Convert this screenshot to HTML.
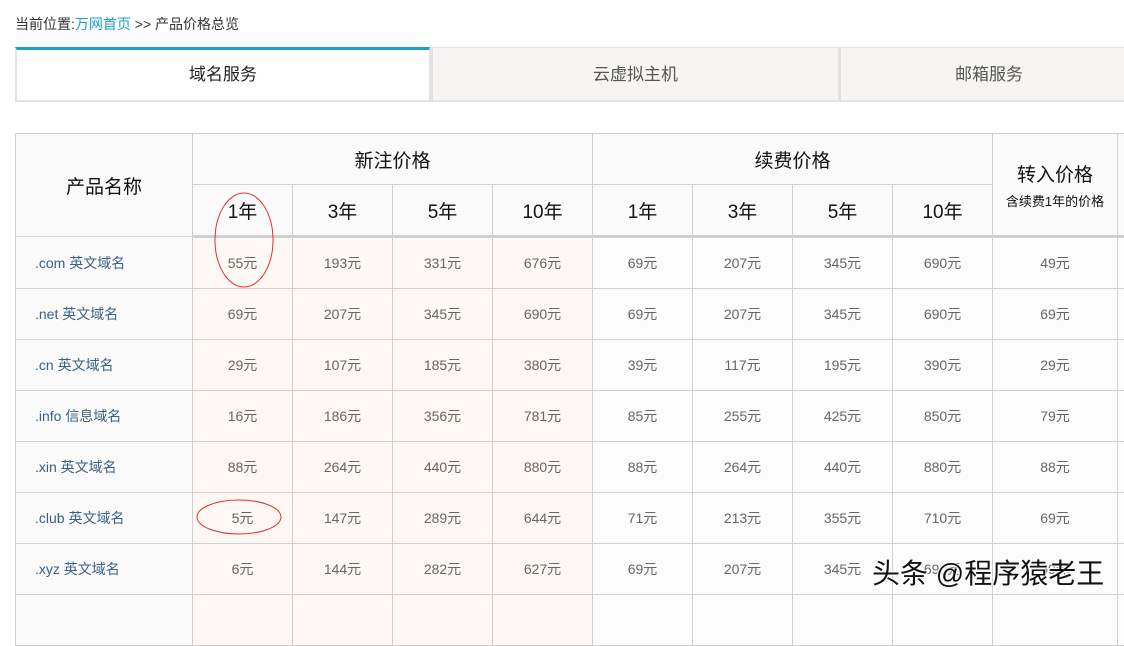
<!DOCTYPE html>
<html><head><meta charset="utf-8"><style>
body{margin:0;width:1124px;height:602px;overflow:hidden;background:#fff;font-family:"Liberation Sans","Noto Sans CJK SC",sans-serif;position:relative}
.bc{position:absolute;left:15px;top:14px;font-size:14px;color:#333}
.bc a{color:#1a9fd0}
.tab{position:absolute;top:47px;height:55px;box-sizing:border-box;background:#f7f5f3;border:1px solid #e2e2e2;border-bottom:2px solid #e2e2e2;text-align:center;line-height:54px;font-size:17px;color:#555}
.t1{left:15px;width:415px;background:#fff;border-top:3px solid #17a0c8;border-left:2px solid #e2e2e2;color:#222;line-height:50px}
.t2{left:430px;width:409px;border-left:3px solid #e2e2e2}
.t3{left:838px;width:300px;border-left:3px solid #e2e2e2}
table{position:absolute;left:15px;top:133px;width:1122px;border-collapse:collapse;table-layout:fixed}
td,th{border:1px solid #d0d0d0;text-align:center;font-weight:normal;padding:0}
th{background:#fafafa;color:#111;font-size:19px}
tr.h2 th{height:50px;border-bottom:3px solid #d0d0d0}
tr.h1 th{height:50px}
td{height:50px;font-size:14px;color:#666;background:#fcfcfc}
td.n{text-align:left;padding-left:19px;color:#3a5f86;background:#fafafa}
td.p{background:#fff7f4}
.sub{font-size:13px;display:block;margin-top:4px}
.wm{position:absolute;left:872px;top:552px;font-size:28px;color:#111;text-shadow:0 0 2px #fff,0 0 2px #fff,1px 1px 0 #fff,-1px -1px 0 #fff}
</style></head><body>
<div class="bc">当前位置:<a>万网首页</a> &gt;&gt; 产品价格总览</div>
<div class="tab t1">域名服务</div>
<div class="tab t2">云虚拟主机</div>
<div class="tab t3">邮箱服务</div>
<table>
<colgroup><col style="width:177px"><col style="width:100px"><col style="width:100px"><col style="width:100px"><col style="width:100px"><col style="width:100px"><col style="width:100px"><col style="width:100px"><col style="width:100px"><col style="width:125px"><col style="width:20px"></colgroup>
<tr class="h1"><th rowspan="2">产品名称</th><th colspan="4">新注价格</th><th colspan="4">续费价格</th><th rowspan="2" style="border-bottom:3px solid #d0d0d0">转入价格<span class="sub">含续费1年的价格</span></th><th rowspan="2" style="border-bottom:3px solid #d0d0d0"></th></tr>
<tr class="h2"><th>1年</th><th>3年</th><th>5年</th><th>10年</th><th>1年</th><th>3年</th><th>5年</th><th>10年</th></tr>
<tr><td class="n">.com 英文域名</td><td class="p">55元</td><td class="p">193元</td><td class="p">331元</td><td class="p">676元</td><td>69元</td><td>207元</td><td>345元</td><td>690元</td><td>49元</td><td></td></tr>
<tr><td class="n">.net 英文域名</td><td class="p">69元</td><td class="p">207元</td><td class="p">345元</td><td class="p">690元</td><td>69元</td><td>207元</td><td>345元</td><td>690元</td><td>69元</td><td></td></tr>
<tr><td class="n">.cn 英文域名</td><td class="p">29元</td><td class="p">107元</td><td class="p">185元</td><td class="p">380元</td><td>39元</td><td>117元</td><td>195元</td><td>390元</td><td>29元</td><td></td></tr>
<tr><td class="n">.info 信息域名</td><td class="p">16元</td><td class="p">186元</td><td class="p">356元</td><td class="p">781元</td><td>85元</td><td>255元</td><td>425元</td><td>850元</td><td>79元</td><td></td></tr>
<tr><td class="n">.xin 英文域名</td><td class="p">88元</td><td class="p">264元</td><td class="p">440元</td><td class="p">880元</td><td>88元</td><td>264元</td><td>440元</td><td>880元</td><td>88元</td><td></td></tr>
<tr><td class="n">.club 英文域名</td><td class="p">5元</td><td class="p">147元</td><td class="p">289元</td><td class="p">644元</td><td>71元</td><td>213元</td><td>355元</td><td>710元</td><td>69元</td><td></td></tr>
<tr><td class="n">.xyz 英文域名</td><td class="p">6元</td><td class="p">144元</td><td class="p">282元</td><td class="p">627元</td><td>69元</td><td>207元</td><td>345元</td><td>690元</td><td>69元</td><td></td></tr>
<tr><td class="n"></td><td class="p"></td><td class="p"></td><td class="p"></td><td class="p"></td><td></td><td></td><td></td><td></td><td></td><td></td></tr>
</table>
<svg style="position:absolute;left:0;top:0" width="1124" height="602"><ellipse cx="244" cy="240" rx="29" ry="47" fill="none" stroke="#e03030" stroke-width="1"/><ellipse cx="239" cy="517" rx="42" ry="17" fill="none" stroke="#e03030" stroke-width="1"/></svg>
<div class="wm">头条 @程序猿老王</div>
</body></html>
